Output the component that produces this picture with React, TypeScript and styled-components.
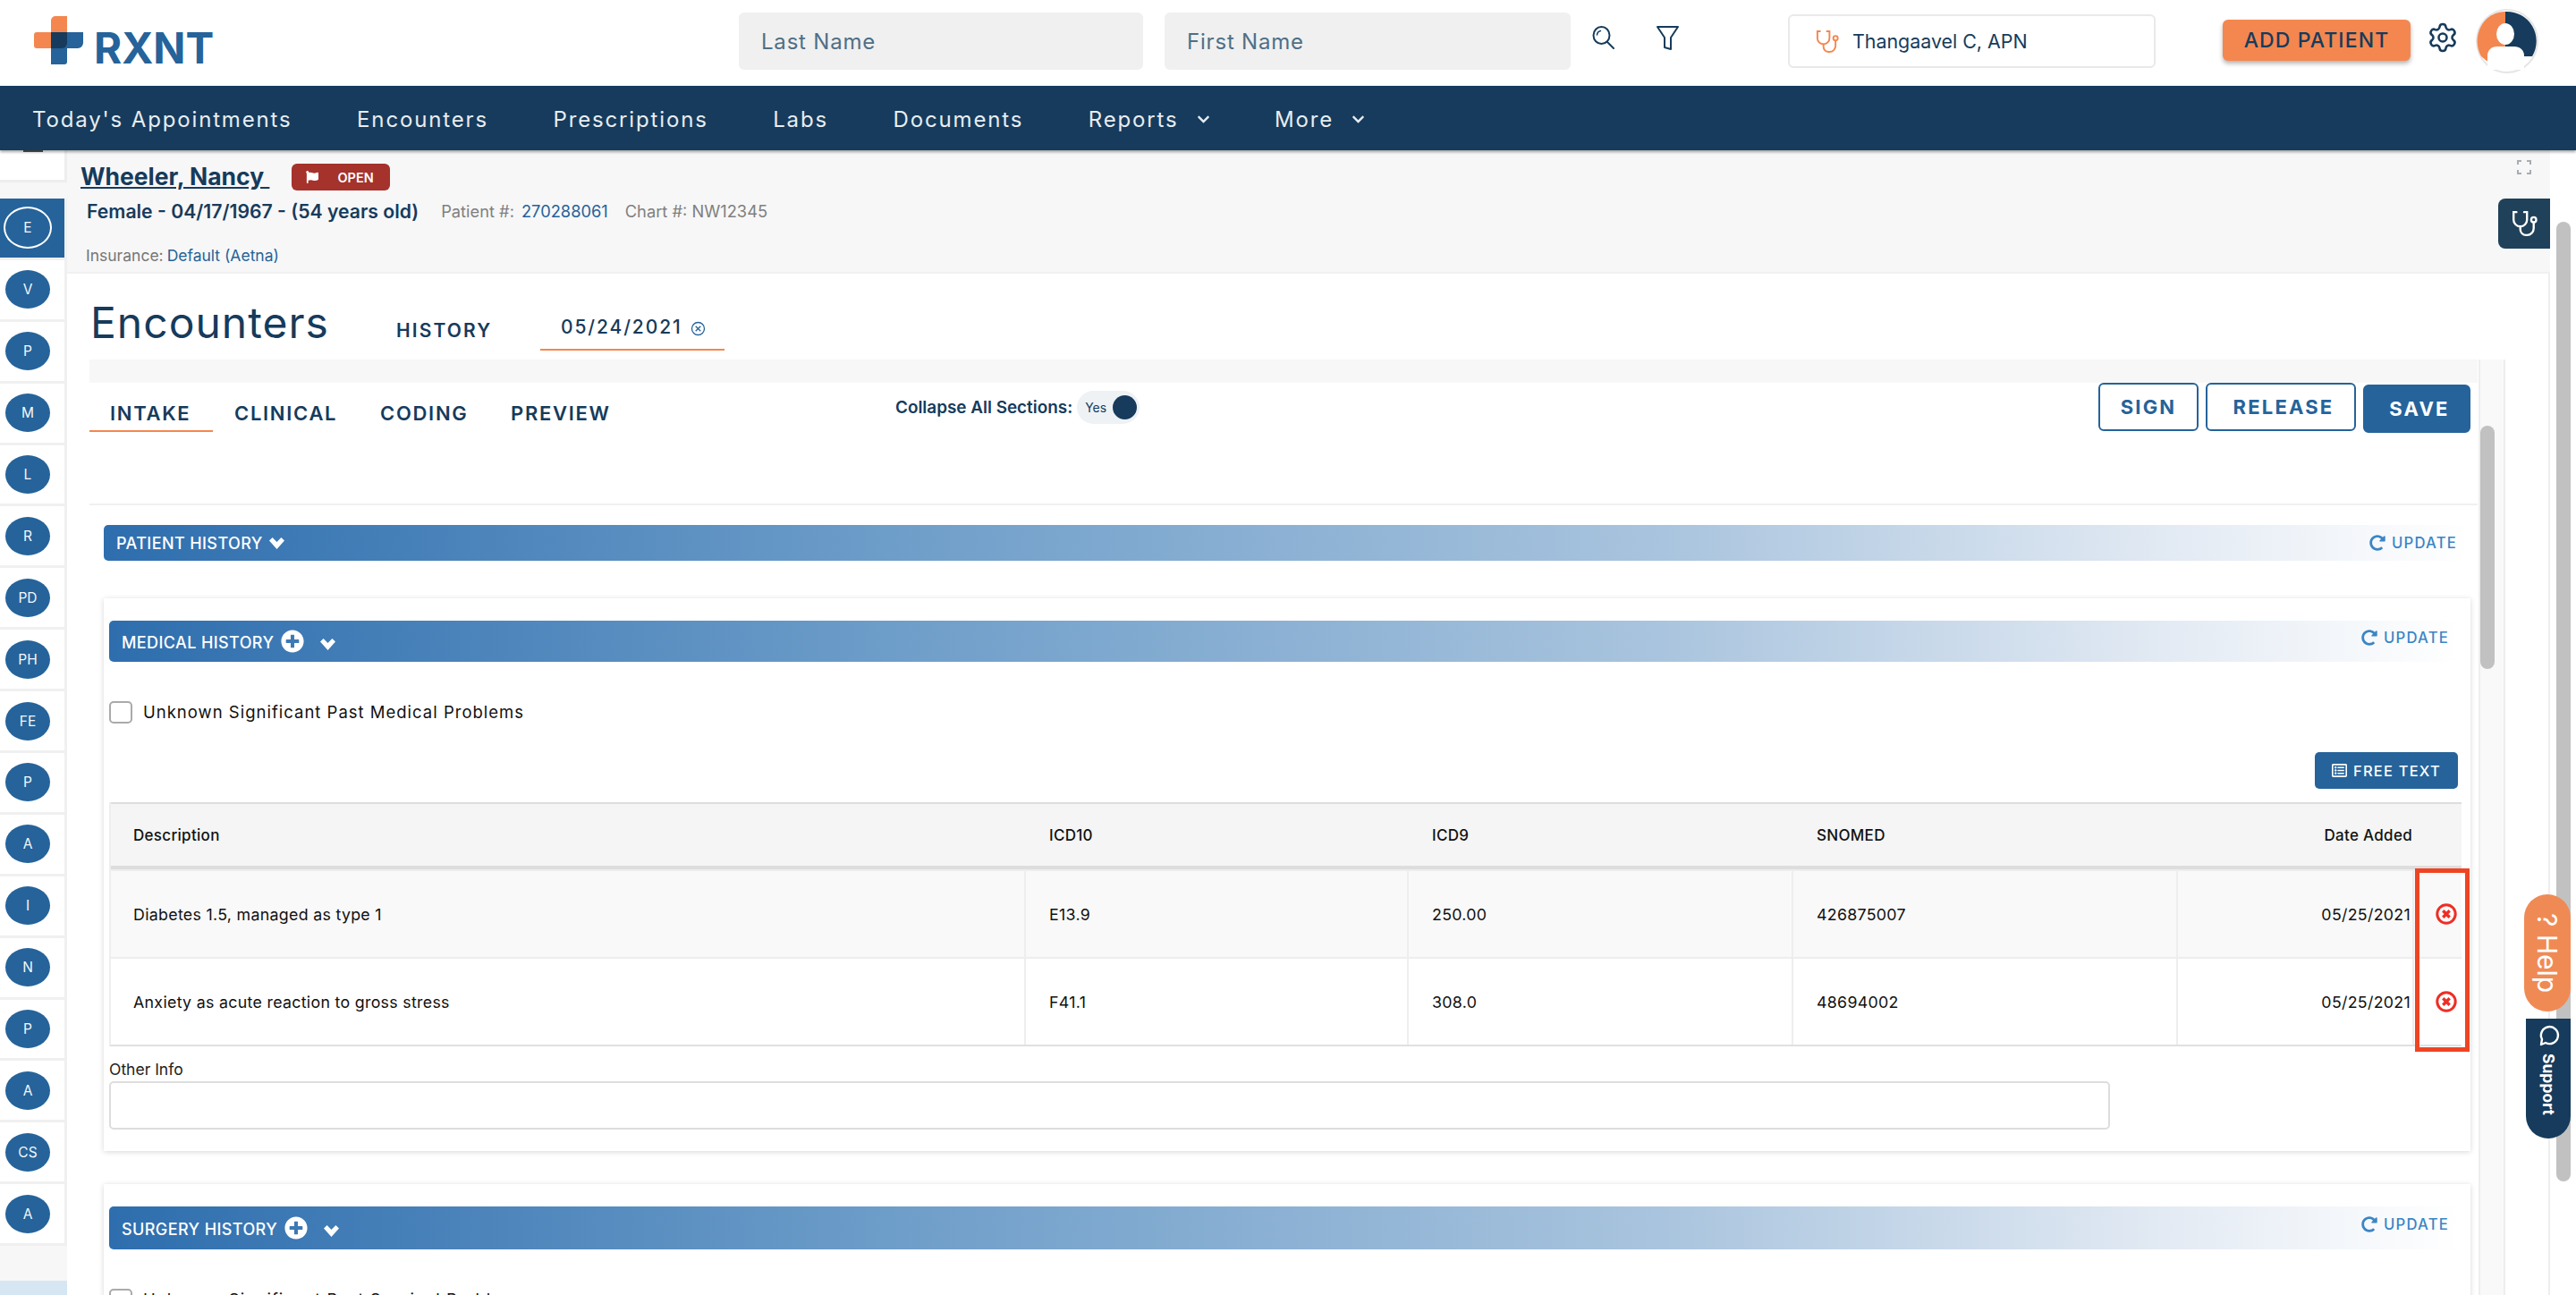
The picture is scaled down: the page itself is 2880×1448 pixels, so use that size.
import React from 'react';
import styled, { createGlobalStyle } from 'styled-components';
import { FaChevronDown, FaFlag, FaPlusCircle, FaRedoAlt, FaRegListAlt } from 'react-icons/fa';
import { Settings } from 'lucide-react';

const navy = '#163b5c';
const blue = '#25639a';
const orange = '#f4874f';
const font = 'Inter, "Liberation Sans", sans-serif';

const GlobalStyle = createGlobalStyle`
  html, body { margin: 0; padding: 0; height: 100%; overflow: hidden; background: #fff; }
  body { font-family: ${font}; }
  * { box-sizing: border-box; }
`;

const Page = styled.div`
  height: 1448px;
  display: flex;
  flex-direction: column;
  overflow: hidden;
`;

/* top bar */
const Header = styled.header`
  height: 96px;
  flex: none;
  display: flex;
  align-items: flex-start;
  background: #fff;
`;
const LogoBox = styled.div`
  width: 826px;
  flex: none;
  padding: 18px 0 0 38px;
  display: flex;
  align-items: flex-end;
  height: 72px;
`;
const LogoText = styled.span`
  font-size: 47.5px;
  font-weight: 700;
  line-height: 36px;
  height: 36px;
  color: ${blue};
  margin-left: 12px;
`;
const SearchField = styled.div`
  width: ${({ $w }: { $w: number }) => $w}px;
  height: 64px;
  margin: 14px 24px 0 0;
  padding-left: 25px;
  display: flex;
  align-items: center;
  border-radius: 6px;
  background: #f0f0f0;
  color: #4f6f86;
  font-size: 24px;
  letter-spacing: 0.8px;
`;
const IconButton = styled.div`
  width: ${({ $w }: { $w: number }) => $w}px;
  flex: none;
  padding-top: 29px;
  line-height: 0;
`;
const ProviderBox = styled.div`
  width: 411px;
  height: 60px;
  margin-top: 16px;
  flex: none;
  display: flex;
  align-items: center;
  gap: 15px;
  padding-left: 28px;
  border: 2px solid #e9e9e9;
  border-radius: 6px;
  color: ${navy};
  font-size: 21.4px;
`;
const AddPatient = styled.button`
  width: 210px;
  height: 46px;
  margin: 22px 20px 0 75px;
  flex: none;
  padding: 0;
  border: 0;
  border-radius: 6px;
  background: ${orange};
  box-shadow: 0 3px 5px rgba(0, 0, 0, 0.3);
  color: ${navy};
  font: 500 23px ${font};
  letter-spacing: 1.1px;
`;
const GearWrap = styled.div`
  width: 53px;
  flex: none;
  padding-top: 24px;
  margin-left: -2px;
  margin-right: 2px;
  line-height: 0;
  color: ${navy};
`;
const Avatar = styled.div`
  width: 70px;
  height: 72px;
  margin-top: 10px;
  flex: none;
  line-height: 0;
`;

/* main navigation */
const Nav = styled.nav`
  height: 72px;
  flex: none;
  display: flex;
  align-items: center;
  gap: 72.5px;
  padding: 2px 0 0 36px;
  background: ${navy};
  box-shadow: 0 2px 3px rgba(0, 0, 0, 0.35);
  position: relative;
  z-index: 3;
`;
const NavItem = styled.span`
  display: flex;
  align-items: center;
  gap: 20px;
  color: #e8edf1;
  font-size: 24px;
  letter-spacing: 1.85px;
  white-space: nowrap;
`;

const Body = styled.div`
  flex: 1;
  min-height: 0;
  display: flex;
`;

/* section rail */
const Rail = styled.aside`
  width: 75px;
  flex: none;
  display: flex;
  flex-direction: column;
  background: #f7f7f7;
`;
const RailStub = styled.div`
  height: 36px;
  width: 75px;
  margin-bottom: 18px;
  background: #fff;
  border: 2px solid #eee;
  border-width: 0 3px 3px 0;
  &::before {
    content: '';
    display: block;
    width: 22px;
    height: 2px;
    margin-left: 26px;
    background: #555;
  }
`;
const RailCell = styled.div<{ $active?: boolean }>`
  width: 75px;
  height: 68.9px;
  flex: none;
  display: flex;
  align-items: center;
  padding-left: 6px;
  background: ${({ $active }) => ($active ? blue : '#fff')};
  border: solid #f0f0f0;
  border-width: 0 3px 3px 0;
`;
const RailDot = styled.span<{ $active?: boolean }>`
  width: ${({ $active }) => ($active ? 54 : 50)}px;
  height: ${({ $active }) => ($active ? 47 : 43)}px;
  margin-left: ${({ $active }) => ($active ? '-2px' : '0')};
  display: flex;
  align-items: center;
  justify-content: center;
  border-radius: 50%;
  background: ${blue};
  border: ${({ $active }) => ($active ? '2px solid #fff' : '0')};
  color: #f4f7fa;
  font-size: 15.5px;
  font-weight: 400;
`;
const RailFill = styled.div`
  flex: 1;
`;
const RailFoot = styled.div`
  height: 16px;
  flex: none;
  background: #d6e6f3;
`;

const Main = styled.main`
  flex: 1;
  min-width: 0;
  display: flex;
  flex-direction: column;
  position: relative;
`;

/* patient banner */
const Banner = styled.section`
  height: 138px;
  flex: none;
  padding: 13px 0 0 15px;
  background: #f7f7f7;
  border-bottom: 2px solid #f1f1f4;
  position: relative;
`;
const BannerTop = styled.div`
  display: flex;
  align-items: center;
  height: 32px;
  gap: 25px;
`;
const PatientName = styled.a`
  color: ${navy};
  font-size: 26.5px;
  font-weight: 700;
  text-decoration: underline;
  white-space: pre;
`;
const StatusBadge = styled.span`
  width: 110px;
  height: 30px;
  margin-top: 2px;
  display: flex;
  align-items: center;
  gap: 21px;
  padding-left: 16px;
  border-radius: 6px;
  background: #a5322b;
  color: #fff;
  font-size: 14.5px;
  font-weight: 600;
`;
const BannerLine = styled.div`
  display: flex;
  align-items: center;
  height: 24px;
  margin: 11px 0 0 7px;
  color: #808080;
  font-size: 18.3px;
`;
const Demographics = styled.strong`
  color: ${navy};
  font-size: 21.2px;
  font-weight: 600;
  margin-right: 25px;
`;
const ChartText = styled.span`
  margin-left: 19px;
`;
const PatientLink = styled.a`
  color: ${blue};
  margin-left: 8px;
`;
const InsuranceLine = styled.div`
  margin: 26px 0 0 6px;
  line-height: 24px;
  color: #767676;
  font-size: 17.5px;
`;
const InsuranceLink = styled.a`
  color: ${blue};
  margin-left: 4px;
`;
const ExpandIcon = styled.div`
  position: absolute;
  top: 11px;
  left: 2739px;
  line-height: 0;
`;
const ClinicalTab = styled.div`
  position: absolute;
  top: 54px;
  right: 0;
  width: 58px;
  height: 56px;
  display: flex;
  align-items: center;
  justify-content: center;
  border-radius: 8px 0 0 8px;
  background: #1f4159;
`;

/* encounter area */
const ContentRow = styled.div`
  flex: 1;
  min-height: 0;
  display: flex;
  background: #fff;
`;
const Column = styled.div`
  width: 2776px;
  flex: none;
  border-right: 2px solid #eee;
  display: flex;
  flex-direction: column;
`;
const TitleRow = styled.div`
  height: 96px;
  flex: none;
  display: flex;
  align-items: flex-start;
  padding-left: 26px;
`;
const PageTitle = styled.h1`
  margin: 27px 0 0;
  width: 342px;
  color: ${navy};
  font-size: 48px;
  line-height: 56px;
  font-weight: 400;
  letter-spacing: 1px;
`;
const HistoryTab = styled.span`
  margin: 50px 55px 0 0;
  width: 106px;
  color: ${navy};
  font-size: 21px;
  line-height: 28px;
  font-weight: 600;
  letter-spacing: 2.1px;
`;
const DateTab = styled.span`
  width: 206px;
  height: 86px;
  padding: 46px 0 0 23px;
  display: flex;
  align-items: flex-start;
  gap: 9px;
  border-bottom: 2px solid ${orange};
  color: ${navy};
  font-size: 21px;
  line-height: 28px;
  font-weight: 500;
  letter-spacing: 1.9px;
`;
const PanelRow = styled.div`
  flex: 1;
  min-height: 0;
  display: flex;
  padding-left: 25px;
`;
const Panel = styled.div`
  width: 2670px;
  flex: none;
  display: flex;
  flex-direction: column;
`;
const Strip = styled.div`
  height: 26px;
  flex: none;
  background: #f7f7f7;
`;
const ActionRow = styled.div`
  height: 137px;
  flex: none;
  display: flex;
  align-items: flex-start;
  border-bottom: 2px solid #f0f0f0;
`;
const TabGroup = styled.div`
  display: flex;
  width: 901px;
`;
const SubTab = styled.span<{ $active?: boolean; $w: number }>`
  width: ${({ $w }) => $w}px;
  height: 55px;
  padding: 20px 0 0 ${({ $active }) => ($active ? '23px' : '0')};
  color: ${navy};
  font-size: 22px;
  line-height: 28px;
  font-weight: 600;
  letter-spacing: 1.7px;
  border-bottom: ${({ $active }) => ($active ? `2px solid ${orange}` : '0')};
  margin-right: ${({ $active }) => ($active ? '24px' : '0')};
`;
const Collapse = styled.div`
  display: flex;
  align-items: center;
  width: 1345px;
  height: 37px;
  margin-top: 9px;
  gap: 5px;
  color: ${navy};
  font-size: 18.9px;
  font-weight: 600;
`;
const Toggle = styled.div`
  width: 70px;
  height: 37px;
  display: flex;
  align-items: center;
  justify-content: space-between;
  padding: 0 3px 0 9px;
  border-radius: 19px;
  background: #eef2f5;
  color: ${navy};
  font-size: 14px;
  font-weight: 400;
`;
const ToggleKnob = styled.span`
  width: 27px;
  height: 27px;
  border-radius: 50%;
  background: ${navy};
`;
const ActionButton = styled.button<{ $solid?: boolean; $w: number; $shift?: number }>`
  width: ${({ $w }) => $w}px;
  height: 54px;
  margin: ${({ $solid }) => ($solid ? '2px' : '0')} 8px 0 0;
  padding: 0 0 0 ${({ $shift }) => $shift || 0}px;
  border: 2px solid ${blue};
  border-radius: 6px;
  background: ${({ $solid }) => ($solid ? blue : '#fff')};
  color: ${({ $solid }) => ($solid ? '#fff' : blue)};
  font: 700 22px ${font};
  letter-spacing: 2.2px;
`;
const SectionBar = styled.div<{ $h: number }>`
  height: ${({ $h }) => $h}px;
  display: flex;
  align-items: center;
  padding-left: 14px;
  border-radius: 5px;
  background: linear-gradient(90deg, #2e6eae 0%, #6d9dc9 33%, #a9c4de 66%, #e4ebf4 88%, #fff 100%);
  color: #fff;
  font-size: 18px;
  font-weight: 500;
  letter-spacing: 0.4px;
`;
const BarLabel = styled.span<{ $drop?: number }>`
  padding-top: ${({ $drop }) => $drop || 0}px;
`;
const BarChevron = styled.span<{ $gap: number; $drop?: number }>`
  margin-left: ${({ $gap }) => $gap}px;
  padding-top: ${({ $drop }) => $drop || 0}px;
  line-height: 0;
`;
const PlusIcon = styled.span`
  margin-left: 8px;
  line-height: 0;
  font-size: 26px;
`;
const UpdateLink = styled.span<{ $right: number; $lift?: number }>`
  margin-left: auto;
  margin-right: ${({ $right }) => $right}px;
  margin-bottom: ${({ $lift }) => $lift || 0}px;
  display: flex;
  align-items: center;
  gap: 7px;
  color: #3b85c4;
  font-size: 16.7px;
  letter-spacing: 1.2px;
`;
const TopSection = styled.div`
  margin: 22px 10px 0 16px;
`;
const Card = styled.section<{ $gap: number }>`
  width: 2646px;
  margin: ${({ $gap }) => $gap}px 0 0 16px;
  padding: 25px 12px 0 6px;
  flex: none;
  background: #fff;
  box-shadow: 0 1px 6px rgba(0, 0, 0, 0.16);
`;
const CheckRow = styled.label`
  display: flex;
  align-items: center;
  gap: 12px;
  height: 26px;
  margin-top: 43px;
  color: #111;
  font-size: 18.5px;
  letter-spacing: 1px;
`;
const CheckBox = styled.span`
  width: 26px;
  height: 25px;
  flex: none;
  border: 2px solid #aaa;
  border-radius: 5px;
`;
const FreeTextRow = styled.div`
  display: flex;
  justify-content: flex-end;
  margin: 32px 2px 15px 0;
`;
const FreeText = styled.button`
  width: 160px;
  height: 41px;
  padding: 0;
  display: flex;
  align-items: center;
  justify-content: center;
  gap: 7px;
  border: 0;
  border-radius: 5px;
  background: ${blue};
  color: #fff;
  font: 500 16.5px ${font};
  letter-spacing: 1.2px;
`;
const Table = styled.div`
  position: relative;
  width: 2630px;
  border-bottom: 2px solid #e0e0e0;
  border-left: 2px solid #eee;
`;
const TableRow = styled.div<{ $head?: boolean; $shade?: boolean }>`
  display: grid;
  grid-template-columns: 1023px 428px 430px 430px 264px 53px;
  height: ${({ $head }) => ($head ? '75px' : '98px')};
  background: ${({ $head, $shade }) => ($head ? '#f4f5f4' : $shade ? '#f9f9f9' : '#fff')};
  border-top: ${({ $head }) => ($head ? '2px solid #ddd' : '0')};
  border-bottom: ${({ $head }) => ($head ? '4px solid #ddd' : '0')};
  & + & { ${({ $shade }) => (!$shade ? 'border-top: 2px solid #eee;' : '')} }
`;
const Cell = styled.div<{ $head?: boolean; $date?: boolean; $first?: boolean }>`
  display: flex;
  align-items: center;
  justify-content: ${({ $date }) => ($date ? 'flex-end' : 'flex-start')};
  padding: ${({ $date, $first }) => ($date ? '0 2px 0 0' : $first ? '0 0 0 25px' : '0 0 0 26px')};
  border-right: ${({ $head }) => ($head ? '0' : '2px solid #eee')};
  color: #111;
  font-size: ${({ $head }) => ($head ? 17 : 17.8)}px;
  font-weight: ${({ $head }) => ($head ? 500 : 400)};
  letter-spacing: 0.3px;
  &:last-child { border-right: 0; }
`;
const RemoveCell = styled.div`
  display: flex;
  align-items: center;
  justify-content: flex-end;
  padding-right: 5px;
  line-height: 0;
`;
const Callout = styled.div`
  position: absolute;
  left: 2576px;
  top: 74px;
  width: 61px;
  height: 205px;
  border: 5px solid #ef4423;
`;
const FieldLabel = styled.div`
  margin-top: 14px;
  line-height: 24px;
  color: #222;
  font-size: 17.5px;
`;
const FieldBox = styled.div`
  width: 2237px;
  height: 54px;
  margin: 1px 0 24px;
  border: 2px solid #ddd;
  border-radius: 5px;
`;
const Gutter = styled.div`
  width: 30px;
  flex: none;
  margin-left: 1px;
  background: #f9f9f9;
  border: solid #eee;
  border-width: 0 2px;
  position: relative;
`;
const Thumb = styled.div<{ $top: number; $h: number }>`
  position: absolute;
  top: ${({ $top }) => $top}px;
  width: 16px;
  height: ${({ $h }) => $h}px;
  border-radius: 8px;
  background: #c1c1c1;
`;
const OuterTrack = styled.div`
  width: 29px;
  flex: none;
  position: relative;
  padding-left: 7px;
  background: #fff;
  z-index: 1;
`;
const HelpTab = styled.div`
  position: absolute;
  top: 832px;
  right: 6px;
  width: 52px;
  height: 131px;
  display: flex;
  align-items: center;
  justify-content: center;
  border-radius: 26px;
  background: #f08a55;
  color: #fff;
  font-size: 30px;
  z-index: 5;
`;
const SupportTab = styled.div`
  position: absolute;
  top: 971px;
  right: 6px;
  width: 50px;
  height: 134px;
  display: flex;
  flex-direction: column;
  align-items: center;
  gap: 8px;
  padding-top: 5px;
  border-radius: 0 0 25px 25px;
  background: ${navy};
  color: #fff;
  font-size: 17.5px;
  font-weight: 700;
  z-index: 5;
`;
const SideText = styled.span`
  writing-mode: vertical-rl;
  white-space: nowrap;
`;

/* drawings */
const Logo = () => (
  <svg width="55" height="54" viewBox="0 0 55 54">
    <path d="M24 0h13v18H19v18H3a3 3 0 0 1-3-3V21a3 3 0 0 1 3-3h16v-13a5 5 0 0 1 5-5z" fill={orange} />
    <path d="M19 18h36v12a6 6 0 0 1-6 6H37v15a3 3 0 0 1-3 3H19z" fill={blue} />
    <path d="M19 18h18v12a6 6 0 0 1-6 6H19z" fill={navy} />
  </svg>
);

const Stethoscope = ({ color, w, h, sw = 2 }: { color: string; w: number; h: number; sw?: number }) => (
  <svg width={w} height={h} viewBox="0 0 28 28" fill="none" stroke={color} strokeWidth={sw} strokeLinecap="round">
    <path d="M6 2H3v8a7 7 0 0 0 14 0V2h-3" />
    <path d="M10 17v3a6 6 0 0 0 6 6h1a7 7 0 0 0 7-7v-6" />
    <circle cx="24" cy="10" r="2.6" />
  </svg>
);

const SearchIcon = () => (
  <svg width="25" height="26" viewBox="0 0 25 26" fill="none" stroke={navy} strokeWidth="2" strokeLinecap="round">
    <ellipse cx="10.5" cy="10.5" rx="9" ry="9.5" />
    <path d="M17 18l7 7" />
    <path d="M5.5 10a5 5 0 0 1 4-4.5" strokeWidth="1.5" />
  </svg>
);

const FunnelIcon = () => (
  <svg width="25" height="28" viewBox="0 0 25 28" fill="none" stroke={navy} strokeWidth="2" strokeLinejoin="round">
    <path d="M1 1h23l-8 12v13l-7-2V13z" />
  </svg>
);

const AvatarIcon = () => (
  <svg width="70" height="72" viewBox="0 0 70 72">
    <ellipse cx="35" cy="36" rx="34" ry="35" fill="#fff" stroke="#e6e6e6" strokeWidth="2" />
    <path d="M33 3a31 33 0 0 0-27 50l6 5h21z" fill={orange} />
    <path d="M33 3v50h30a33 33 0 0 0-30-50z" fill={navy} />
    <ellipse cx="33" cy="28" rx="10" ry="12" fill="#fff" />
    <path d="M13 68V52c0-6 5-10 10-10h20c6 0 11 4 11 10v16z" fill="#fff" />
  </svg>
);

const RemoveIcon = () => (
  <svg width="24" height="24" viewBox="0 0 24 24" fill="none" stroke="#ee2e24">
    <circle cx="12" cy="12" r="10.2" strokeWidth="3" />
    <path d="M8.3 8.3l7.4 7.4M15.7 8.3l-7.4 7.4" strokeWidth="3.4" />
  </svg>
);

const SmallClose = () => (
  <svg width="17" height="17" viewBox="0 0 17 17" fill="none" stroke={blue} strokeWidth="1.3" style={{ marginTop: 7 }}>
    <circle cx="8.5" cy="8.5" r="7" />
    <path d="M5.7 5.7l5.6 5.6M11.3 5.7l-5.6 5.6" />
  </svg>
);

const CornersIcon = () => (
  <svg width="16" height="16" viewBox="0 0 16 16" fill="none" stroke="#a9adb1" strokeWidth="2">
    <path d="M1 5V1h4M11 1h4v4M15 11v4h-4M5 15H1v-4" />
  </svg>
);

const BubbleIcon = () => (
  <svg width="26" height="26" viewBox="0 0 26 26" fill="none" stroke="#fff" strokeWidth="2.4">
    <path d="M5 24l1-6a9.5 9.5 0 1 1 4 4z" strokeLinejoin="round" />
  </svg>
);

const HeavyChevron = ({ w = 17, h = 13 }: { w?: number; h?: number }) => (
  <svg width={w} height={h} viewBox="0 0 17 13" fill="#fff">
    <path d="M0 3.5L3.6 0l4.9 5L13.4 0 17 3.5 8.5 13z" />
  </svg>
);

const railItems = ['V', 'P', 'M', 'L', 'R', 'PD', 'PH', 'FE', 'P', 'A', 'I', 'N', 'P', 'A', 'CS', 'A'];

const rows = [
  { name: 'Diabetes 1.5, managed as type 1', icd10: 'E13.9', icd9: '250.00', snomed: '426875007' },
  { name: 'Anxiety as acute reaction to gross stress', icd10: 'F41.1', icd9: '308.0', snomed: '48694002' },
];

const Update = ({ right, lift }: { right: number; lift?: number }) => (
  <UpdateLink $right={right} $lift={lift}>
    <FaRedoAlt size={18} />
    UPDATE
  </UpdateLink>
);

const App = () => (
  <Page>
    <GlobalStyle />
    <Header>
      <LogoBox>
        <Logo />
        <LogoText>RXNT</LogoText>
      </LogoBox>
      <SearchField $w={452}>Last Name</SearchField>
      <SearchField $w={454}>First Name</SearchField>
      <IconButton $w={72}><SearchIcon /></IconButton>
      <IconButton $w={147}><FunnelIcon /></IconButton>
      <ProviderBox>
        <Stethoscope color={orange} w={27} h={27} />
        Thangaavel C, APN
      </ProviderBox>
      <AddPatient>ADD PATIENT</AddPatient>
      <GearWrap><Settings size={36} strokeWidth={1.7} /></GearWrap>
      <Avatar><AvatarIcon /></Avatar>
    </Header>

    <Nav>
      <NavItem>Today's Appointments</NavItem>
      <NavItem>Encounters</NavItem>
      <NavItem>Prescriptions</NavItem>
      <NavItem>Labs</NavItem>
      <NavItem>Documents</NavItem>
      <NavItem>Reports <FaChevronDown size={15} /></NavItem>
      <NavItem>More <FaChevronDown size={15} /></NavItem>
    </Nav>

    <Body>
      <Rail>
        <RailStub />
        <RailCell $active><RailDot $active>E</RailDot></RailCell>
        {railItems.map((item, i) => (
          <RailCell key={i}><RailDot>{item}</RailDot></RailCell>
        ))}
        <RailFill />
        <RailFoot />
      </Rail>

      <Main>
        <Banner>
          <BannerTop>
            <PatientName>Wheeler, Nancy </PatientName>
            <StatusBadge><FaFlag size={14} />OPEN</StatusBadge>
          </BannerTop>
          <BannerLine>
            <Demographics>Female - 04/17/1967 - (54 years old)</Demographics>
            Patient #:
            <PatientLink>270288061</PatientLink>
            <ChartText>Chart #: NW12345</ChartText>
          </BannerLine>
          <InsuranceLine>
            Insurance:<InsuranceLink>Default (Aetna)</InsuranceLink>
          </InsuranceLine>
          <ExpandIcon><CornersIcon /></ExpandIcon>
          <ClinicalTab><Stethoscope color="#fff" w={30} h={30} sw={2.2} /></ClinicalTab>
        </Banner>

        <ContentRow>
          <Column>
            <TitleRow>
              <PageTitle>Encounters</PageTitle>
              <HistoryTab>HISTORY</HistoryTab>
              <DateTab>05/24/2021 <SmallClose /></DateTab>
            </TitleRow>
            <PanelRow>
              <Panel>
                <Strip />
                <ActionRow>
                  <TabGroup>
                    <SubTab $active $w={138}>INTAKE</SubTab>
                    <SubTab $w={163}>CLINICAL</SubTab>
                    <SubTab $w={146}>CODING</SubTab>
                    <SubTab $w={130}>PREVIEW</SubTab>
                  </TabGroup>
                  <Collapse>
                    Collapse All Sections:
                    <Toggle>Yes<ToggleKnob /></Toggle>
                  </Collapse>
                  <ActionButton $w={112}>SIGN</ActionButton>
                  <ActionButton $w={168} $shift={6}>RELEASE</ActionButton>
                  <ActionButton $w={120} $shift={6} $solid>SAVE</ActionButton>
                </ActionRow>

                <TopSection>
                  <SectionBar $h={40}>
                    PATIENT HISTORY
                    <BarChevron $gap={7}><HeavyChevron /></BarChevron>
                    <Update right={13} />
                  </SectionBar>
                </TopSection>

                <Card $gap={42}>
                  <SectionBar $h={46}>
                    <BarLabel $drop={3}>MEDICAL HISTORY</BarLabel>
                    <PlusIcon><FaPlusCircle /></PlusIcon>
                    <BarChevron $gap={18} $drop={6}><HeavyChevron /></BarChevron>
                    <Update right={12} lift={8} />
                  </SectionBar>
                  <CheckRow>
                    <CheckBox />
                    Unknown Significant Past Medical Problems
                  </CheckRow>
                  <FreeTextRow>
                    <FreeText><FaRegListAlt size={17} />FREE TEXT</FreeText>
                  </FreeTextRow>
                  <Table>
                    <TableRow $head>
                      <Cell $head $first>Description</Cell>
                      <Cell $head>ICD10</Cell>
                      <Cell $head>ICD9</Cell>
                      <Cell $head>SNOMED</Cell>
                      <Cell $head $date>Date Added</Cell>
                      <Cell $head />
                    </TableRow>
                    {rows.map((row, i) => (
                      <TableRow key={row.icd10} $shade={i === 0}>
                        <Cell $first>{row.name}</Cell>
                        <Cell>{row.icd10}</Cell>
                        <Cell>{row.icd9}</Cell>
                        <Cell>{row.snomed}</Cell>
                        <Cell $date>05/25/2021</Cell>
                        <RemoveCell><RemoveIcon /></RemoveCell>
                      </TableRow>
                    ))}
                    <Callout />
                  </Table>
                  <FieldLabel>Other Info</FieldLabel>
                  <FieldBox />
                </Card>

                <Card $gap={37}>
                  <SectionBar $h={48}>
                    <BarLabel $drop={3}>SURGERY HISTORY</BarLabel>
                    <PlusIcon><FaPlusCircle /></PlusIcon>
                    <BarChevron $gap={18} $drop={6}><HeavyChevron /></BarChevron>
                    <Update right={12} lift={8} />
                  </SectionBar>
                  <CheckRow>
                    <CheckBox />
                    Unknown Significant Past Surgical Problems
                  </CheckRow>
                </Card>
              </Panel>
              <Gutter>
                <Thumb $top={74} $h={272} />
              </Gutter>
            </PanelRow>
          </Column>
        </ContentRow>
      </Main>

      <OuterTrack>
        <Thumb $top={80} $h={1073} />
        <HelpTab><SideText>? Help</SideText></HelpTab>
        <SupportTab><BubbleIcon /><SideText>Support</SideText></SupportTab>
      </OuterTrack>
    </Body>
  </Page>
);

export default App;
